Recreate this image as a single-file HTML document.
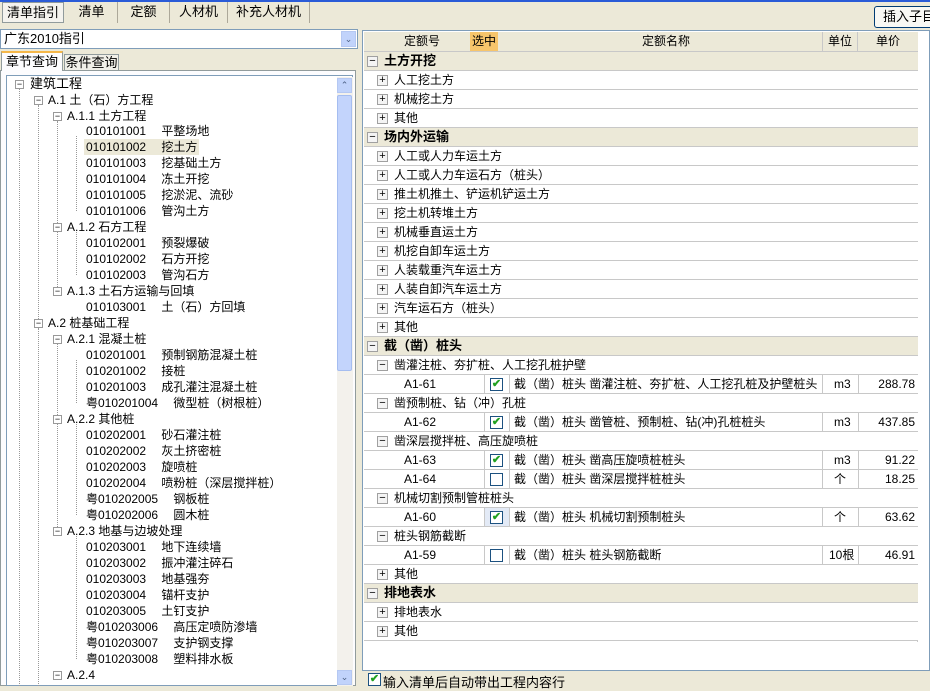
<!DOCTYPE html>
<html><head><meta charset="utf-8"><style>
*{box-sizing:border-box;margin:0;padding:0}
body{width:930px;height:686px;overflow:hidden;background:#ece9d8;font:12px "Liberation Sans","Noto Sans CJK SC","WenQuanYi Zen Hei",sans-serif;color:#000;position:relative}
.a{position:absolute;white-space:nowrap}
.tab{position:absolute;top:2px;height:21px;border-right:1px solid #aca899;text-align:center;line-height:20px;font-size:13px}
.t{position:absolute;white-space:nowrap;height:16px;line-height:16px}
.bx{position:absolute;width:9px;height:9px;border:1px solid #999;background:#fff;font-size:9px;line-height:7px;text-align:center;color:#000}
.row{position:absolute;left:364px;width:554px;height:19px;border-bottom:1px solid #c8c8c8;background:#fff;line-height:18px}
.g{background:#ece9d8;font-weight:bold;font-size:13px}
.pb{position:absolute;left:13px;top:4px;width:11px;height:11px;border:1px solid #a0a0a0;background:#f4f4f4;font-size:11px;line-height:8px;text-align:center;font-weight:normal}
.c{position:absolute;top:0;height:19px;border-left:1px solid #c8c8c8}
.cb{position:absolute;left:126px;top:3px;width:13px;height:13px;border:1px solid #1c5180;background:#fff;color:#21a121;font-size:11px;line-height:11px;text-align:center;font-weight:bold}
</style></head><body>
<div class="a" style="left:0;top:0;width:930px;height:2px;background:#2a5bd7"></div>
<div class="tab" style="left:2px;width:62px;background:#f4f3ee;border:1px solid #919b9c">清单指引</div>
<div class="tab" style="left:66px;width:52px">清单</div>
<div class="tab" style="left:118px;width:52px">定额</div>
<div class="tab" style="left:170px;width:58px">人材机</div>
<div class="tab" style="left:228px;width:82px">补充人材机</div>
<div class="a" style="left:874px;top:6px;width:70px;height:22px;border:1px solid #003c74;border-radius:3px;background:#f8f8f4;line-height:20px;padding-left:8px;font-size:13px">插入子目</div>
<!-- combo -->
<div class="a" style="left:0;top:29px;width:358px;height:20px;border:1px solid #7f9db9;background:#fff;line-height:18px;padding-left:3px;font-size:13px">广东2010指引</div>
<div class="a" style="left:341px;top:31px;width:15px;height:16px;background:#c1d3fb;border:1px solid #b5c8f2;color:#4d6185;font-size:9px;text-align:center;line-height:14px">&#8964;</div>
<div class="a" style="left:1px;top:51px;width:62px;height:20px;background:#fcfcfe;border:1px solid #919b9c;border-bottom:none;border-top:2px solid #f5b749;line-height:17px;text-align:center;font-size:13px;z-index:2">章节查询</div>
<div class="a" style="left:64px;top:54px;width:55px;height:17px;background:#f0efe8;border:1px solid #919b9c;line-height:16px;text-align:center;font-size:13px">条件查询</div>
<div class="a" style="left:0;top:70px;width:356px;height:616px;background:#fcfcfe;border:1px solid #919b9c"></div>
<div class="a" style="left:6px;top:75px;width:347px;height:611px;background:#fff;border:1px solid #7f9db9"></div>
<div class="a" style="left:337px;top:77px;width:16px;height:609px;background:#f3f1ec"></div>
<div class="a" style="left:337px;top:78px;width:15px;height:15px;background:#c1d3fb;border:1px solid #b5c8f2;color:#4d6185;font-size:9px;text-align:center;line-height:13px">&#8963;</div>
<div class="a" style="left:337px;top:95px;width:15px;height:276px;background:#c3d4fc;border:1px solid #a5bdf0;border-radius:2px"></div>
<div class="a" style="left:337px;top:670px;width:15px;height:15px;background:#c1d3fb;border:1px solid #b5c8f2;color:#4d6185;font-size:9px;text-align:center;line-height:13px">&#8964;</div>
<!-- tree lines -->
<div class="a" style="left:19px;top:89px;height:597px;border-left:1px dotted #999"></div>
<div class="a" style="left:38px;top:105px;height:218px;border-left:1px dotted #999"></div>
<div class="a" style="left:38px;top:328px;height:358px;border-left:1px dotted #999"></div>
<div class="a" style="left:57px;top:121px;height:170px;border-left:1px dotted #999"></div>
<div class="a" style="left:57px;top:344px;height:187px;border-left:1px dotted #999"></div>
<div class="a" style="left:76px;top:136px;height:75px;border-left:1px dotted #999"></div>
<div class="a" style="left:76px;top:232px;height:43px;border-left:1px dotted #999"></div>
<div class="a" style="left:76px;top:360px;height:43px;border-left:1px dotted #999"></div>
<div class="a" style="left:76px;top:424px;height:91px;border-left:1px dotted #999"></div>
<div class="a" style="left:76px;top:536px;height:123px;border-left:1px dotted #999"></div>
<div class="bx" style="left:15px;top:80px">−</div><div class="t" style="left:30px;top:76px;font-size:13px">建筑工程</div>
<div class="bx" style="left:34px;top:96px">−</div><div class="t" style="left:48px;top:92px">A.1 土（石）方工程</div>
<div class="bx" style="left:53px;top:112px">−</div><div class="t" style="left:67px;top:108px">A.1.1 土方工程</div>
<div class="t" style="left:86px;top:123px">010101001　 平整场地</div>
<div class="t" style="left:84px;top:139px;background:#ece9d8;padding:0 2px">010101002　 挖土方</div>
<div class="t" style="left:86px;top:155px">010101003　 挖基础土方</div>
<div class="t" style="left:86px;top:171px">010101004　 冻土开挖</div>
<div class="t" style="left:86px;top:187px">010101005　 挖淤泥、流砂</div>
<div class="t" style="left:86px;top:203px">010101006　 管沟土方</div>
<div class="bx" style="left:53px;top:223px">−</div><div class="t" style="left:67px;top:219px">A.1.2 石方工程</div>
<div class="t" style="left:86px;top:235px">010102001　 预裂爆破</div>
<div class="t" style="left:86px;top:251px">010102002　 石方开挖</div>
<div class="t" style="left:86px;top:267px">010102003　 管沟石方</div>
<div class="bx" style="left:53px;top:287px">−</div><div class="t" style="left:67px;top:283px">A.1.3 土石方运输与回填</div>
<div class="t" style="left:86px;top:299px">010103001　 土（石）方回填</div>
<div class="bx" style="left:34px;top:319px">−</div><div class="t" style="left:48px;top:315px">A.2 桩基础工程</div>
<div class="bx" style="left:53px;top:335px">−</div><div class="t" style="left:67px;top:331px">A.2.1 混凝土桩</div>
<div class="t" style="left:86px;top:347px">010201001　 预制钢筋混凝土桩</div>
<div class="t" style="left:86px;top:363px">010201002　 接桩</div>
<div class="t" style="left:86px;top:379px">010201003　 成孔灌注混凝土桩</div>
<div class="t" style="left:86px;top:395px">粤010201004　 微型桩（树根桩）</div>
<div class="bx" style="left:53px;top:415px">−</div><div class="t" style="left:67px;top:411px">A.2.2 其他桩</div>
<div class="t" style="left:86px;top:427px">010202001　 砂石灌注桩</div>
<div class="t" style="left:86px;top:443px">010202002　 灰土挤密桩</div>
<div class="t" style="left:86px;top:459px">010202003　 旋喷桩</div>
<div class="t" style="left:86px;top:475px">010202004　 喷粉桩（深层搅拌桩）</div>
<div class="t" style="left:86px;top:491px">粤010202005　 钢板桩</div>
<div class="t" style="left:86px;top:507px">粤010202006　 圆木桩</div>
<div class="bx" style="left:53px;top:527px">−</div><div class="t" style="left:67px;top:523px">A.2.3 地基与边坡处理</div>
<div class="t" style="left:86px;top:539px">010203001　 地下连续墙</div>
<div class="t" style="left:86px;top:555px">010203002　 振冲灌注碎石</div>
<div class="t" style="left:86px;top:571px">010203003　 地基强夯</div>
<div class="t" style="left:86px;top:587px">010203004　 锚杆支护</div>
<div class="t" style="left:86px;top:603px">010203005　 土钉支护</div>
<div class="t" style="left:86px;top:619px">粤010203006　 高压定喷防渗墙</div>
<div class="t" style="left:86px;top:635px">粤010203007　 支护钢支撑</div>
<div class="t" style="left:86px;top:651px">粤010203008　 塑料排水板</div>
<div class="bx" style="left:53px;top:671px">−</div><div class="t" style="left:67px;top:667px">A.2.4</div>
<!-- right grid -->
<div class="a" style="left:362px;top:30px;width:568px;height:641px;background:#fff;border:1px solid #7f9db9"></div>
<div class="a" style="left:364px;top:32px;width:554px;height:20px;background:#ece9d8;border-bottom:1px solid #c8c8c8;font-size:12px;line-height:19px">
<span class="a" style="left:40px">定额号</span>
<span class="a" style="left:106px;width:28px;height:19px;background:#f7c56b;text-align:center">选中</span>
<span class="a" style="left:278px">定额名称</span>
<span class="a" style="left:098px;top:0"></span>
<span class="a" style="left:458px;width:36px;height:19px;border-left:1px solid #c8c8c8;border-right:1px solid #c8c8c8;text-align:center">单位</span>
<span class="a" style="left:512px">单价</span></div>
<div class="a" style="left:364px;top:52px;width:554px;height:590px;border-right:1px solid #c8c8c8"></div>

<div class="row g" style="top:52px"><span class="pb" style="left:3px">−</span><span class="a" style="left:20px">土方开挖</span></div>
<div class="row" style="top:71px"><span class="pb">+</span><span class="a" style="left:30px">人工挖土方</span></div>
<div class="row" style="top:90px"><span class="pb">+</span><span class="a" style="left:30px">机械挖土方</span></div>
<div class="row" style="top:109px"><span class="pb">+</span><span class="a" style="left:30px">其他</span></div>
<div class="row g" style="top:128px"><span class="pb" style="left:3px">−</span><span class="a" style="left:20px">场内外运输</span></div>
<div class="row" style="top:147px"><span class="pb">+</span><span class="a" style="left:30px">人工或人力车运土方</span></div>
<div class="row" style="top:166px"><span class="pb">+</span><span class="a" style="left:30px">人工或人力车运石方（桩头）</span></div>
<div class="row" style="top:185px"><span class="pb">+</span><span class="a" style="left:30px">推土机推土、铲运机铲运土方</span></div>
<div class="row" style="top:204px"><span class="pb">+</span><span class="a" style="left:30px">挖土机转堆土方</span></div>
<div class="row" style="top:223px"><span class="pb">+</span><span class="a" style="left:30px">机械垂直运土方</span></div>
<div class="row" style="top:242px"><span class="pb">+</span><span class="a" style="left:30px">机挖自卸车运土方</span></div>
<div class="row" style="top:261px"><span class="pb">+</span><span class="a" style="left:30px">人装载重汽车运土方</span></div>
<div class="row" style="top:280px"><span class="pb">+</span><span class="a" style="left:30px">人装自卸汽车运土方</span></div>
<div class="row" style="top:299px"><span class="pb">+</span><span class="a" style="left:30px">汽车运石方（桩头）</span></div>
<div class="row" style="top:318px"><span class="pb">+</span><span class="a" style="left:30px">其他</span></div>
<div class="row g" style="top:337px"><span class="pb" style="left:3px">−</span><span class="a" style="left:20px">截（凿）桩头</span></div>
<div class="row" style="top:356px"><span class="pb">−</span><span class="a" style="left:30px">凿灌注桩、夯扩桩、人工挖孔桩护壁</span></div>
<div class="row" style="top:375px"><span class="a" style="left:40px">A1-61</span><span class="c" style="left:120px"></span><span class="cb">✔</span><span class="c" style="left:145px"></span><span class="a" style="left:150px">截（凿）桩头 凿灌注桩、夯扩桩、人工挖孔桩及护壁桩头</span><span class="c" style="left:458px"></span><span class="a" style="left:470px">m3</span><span class="c" style="left:494px"></span><span class="a" style="right:3px">288.78</span></div>
<div class="row" style="top:394px"><span class="pb">−</span><span class="a" style="left:30px">凿预制桩、钻（冲）孔桩</span></div>
<div class="row" style="top:413px"><span class="a" style="left:40px">A1-62</span><span class="c" style="left:120px"></span><span class="cb">✔</span><span class="c" style="left:145px"></span><span class="a" style="left:150px">截（凿）桩头 凿管桩、预制桩、钻(冲)孔桩桩头</span><span class="c" style="left:458px"></span><span class="a" style="left:470px">m3</span><span class="c" style="left:494px"></span><span class="a" style="right:3px">437.85</span></div>
<div class="row" style="top:432px"><span class="pb">−</span><span class="a" style="left:30px">凿深层搅拌桩、高压旋喷桩</span></div>
<div class="row" style="top:451px"><span class="a" style="left:40px">A1-63</span><span class="c" style="left:120px"></span><span class="cb">✔</span><span class="c" style="left:145px"></span><span class="a" style="left:150px">截（凿）桩头 凿高压旋喷桩桩头</span><span class="c" style="left:458px"></span><span class="a" style="left:470px">m3</span><span class="c" style="left:494px"></span><span class="a" style="right:3px">91.22</span></div>
<div class="row" style="top:470px"><span class="a" style="left:40px">A1-64</span><span class="c" style="left:120px"></span><span class="cb"></span><span class="c" style="left:145px"></span><span class="a" style="left:150px">截（凿）桩头 凿深层搅拌桩桩头</span><span class="c" style="left:458px"></span><span class="a" style="left:470px">个</span><span class="c" style="left:494px"></span><span class="a" style="right:3px">18.25</span></div>
<div class="row" style="top:489px"><span class="pb">−</span><span class="a" style="left:30px">机械切割预制管桩桩头</span></div>
<div class="row" style="top:508px"><span class="a" style="left:40px">A1-60</span><span class="c" style="left:120px"></span><span class="a" style="left:121px;width:24px;height:18px;background:#e3eaf6"></span><span class="cb">✔</span><span class="c" style="left:145px"></span><span class="a" style="left:150px">截（凿）桩头 机械切割预制桩头</span><span class="c" style="left:458px"></span><span class="a" style="left:470px">个</span><span class="c" style="left:494px"></span><span class="a" style="right:3px">63.62</span></div>
<div class="row" style="top:527px"><span class="pb">−</span><span class="a" style="left:30px">桩头钢筋截断</span></div>
<div class="row" style="top:546px"><span class="a" style="left:40px">A1-59</span><span class="c" style="left:120px"></span><span class="cb"></span><span class="c" style="left:145px"></span><span class="a" style="left:150px">截（凿）桩头 桩头钢筋截断</span><span class="c" style="left:458px"></span><span class="a" style="left:465px">10根</span><span class="c" style="left:494px"></span><span class="a" style="right:3px">46.91</span></div>
<div class="row" style="top:565px"><span class="pb">+</span><span class="a" style="left:30px">其他</span></div>
<div class="row g" style="top:584px"><span class="pb" style="left:3px">−</span><span class="a" style="left:20px">排地表水</span></div>
<div class="row" style="top:603px"><span class="pb">+</span><span class="a" style="left:30px">排地表水</span></div>
<div class="row" style="top:622px"><span class="pb">+</span><span class="a" style="left:30px">其他</span></div>
<div class="a" style="left:368px;top:673px;width:13px;height:13px;border:1px solid #1c5180;background:#fff;color:#21a121;font-size:11px;line-height:11px;text-align:center;font-weight:bold">✔</div>
<div class="a" style="left:383px;top:672px;font-size:13px">输入清单后自动带出工程内容行</div>
</body></html>
